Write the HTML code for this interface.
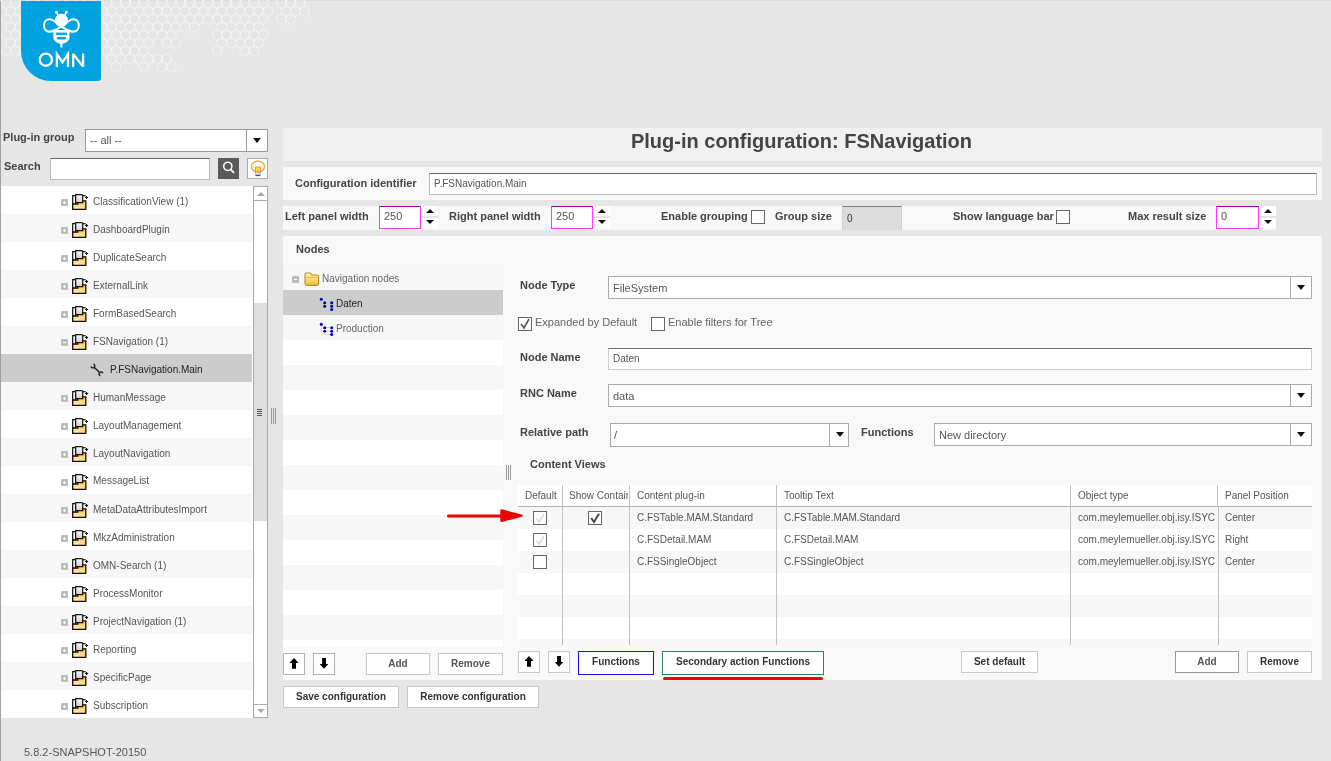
<!DOCTYPE html>
<html><head><meta charset="utf-8">
<style>
*{box-sizing:border-box;margin:0;padding:0}
html,body{width:1331px;height:761px;overflow:hidden;background:#e6e6e6;font-family:"Liberation Sans",sans-serif;color:#555}
.a{position:absolute}
.lbl{position:absolute;font-size:11px;font-weight:bold;color:#444;white-space:nowrap;line-height:13px}
.txt{position:absolute;font-size:10px;color:#666;white-space:nowrap;line-height:12px}
.inp{position:absolute;background:#fff;border:1px solid #aaa}
.tree-row{position:absolute;left:0;width:251px;height:28px}
.tree-row span{position:absolute;left:92px;top:10px;font-size:10px;color:#555;white-space:nowrap;line-height:12px}
.pm{position:absolute;left:60px;top:13px;width:7px;height:7px;background:#bbb;border-radius:1px}
.pm:before{content:"";position:absolute;left:2px;top:3px;width:3px;height:1px;background:#fff}
.pm.p:after{content:"";position:absolute;left:3px;top:2px;width:1px;height:3px;background:#fff}
.fi{position:absolute;left:71px;top:8px;width:17px;height:17px}
.btn{position:absolute;background:#fff;border:1px solid #c8c8c8;font-size:10px;font-weight:bold;color:#333;text-align:center;white-space:nowrap}
.panel{position:absolute;background:#f8f8f8}
.cb{position:absolute;width:14px;height:14px;border:1px solid #666;background:#fff}
.ddb{position:absolute;top:0;right:0;bottom:0;width:21px;border-left:1px solid #aaa}
.ddb:after{content:"";position:absolute;left:6px;top:8px;border-left:4px solid transparent;border-right:4px solid transparent;border-top:5px solid #111}
.spin{position:absolute;width:17px;height:22px;background:#fff}
.spin .u{position:absolute;left:0;top:0;width:17px;height:12px;border-bottom:2px solid #e4e4e4}
.spin .u:after{content:"";position:absolute;left:4.5px;top:3px;border-left:4px solid transparent;border-right:4px solid transparent;border-bottom:4px solid #111}
.spin .d:after{content:"";position:absolute;left:4.5px;top:14px;border-left:4px solid transparent;border-right:4px solid transparent;border-top:4px solid #111}
.mag{position:absolute;background:#fff;border:1px solid #ff38ff;border-top-color:#a000a0;font-size:11px;color:#555;padding-left:4px;line-height:18px}
.grow{position:absolute;left:0;width:794px;height:22px}
.cell{position:absolute;font-size:10px;color:#555;white-space:nowrap;top:5px;line-height:12px}
.vl{position:absolute;width:1px;background:#c0c3c6}
</style></head><body><div style="position:absolute;left:0;top:0;width:1331px;height:761px;will-change:transform">
<!-- left border -->
<div class="a" style="left:0;top:0;width:1px;height:761px;background:#a0a0a0"></div>
<div class="a" style="left:0;top:0;width:1331px;height:1px;background:#dcdde0"></div>

<!-- honeycomb -->
<svg width="0" height="0" style="position:absolute"><defs><linearGradient id="dg" x1="0" y1="0" x2="0" y2="1"><stop offset="0" stop-color="#fff"/><stop offset="0.5" stop-color="#e4e4f6"/><stop offset="1" stop-color="#d8c8a0"/></linearGradient><linearGradient id="fg" x1="0" y1="1" x2="1" y2="0"><stop offset="0" stop-color="#fdf0cc"/><stop offset="0.6" stop-color="#f8d680"/><stop offset="1" stop-color="#f5cc60"/></linearGradient></defs></svg><svg class="a" style="left:0;top:0" width="320" height="80" viewBox="0 0 320 80"><path d="M10.69 5.95 L6.10 8.60 L1.51 5.95 L1.51 0.65 L6.10 -2.00 L10.69 0.65Z M19.87 5.95 L15.28 8.60 L10.69 5.95 L10.69 0.65 L15.28 -2.00 L19.87 0.65Z M29.05 5.95 L24.46 8.60 L19.87 5.95 L19.87 0.65 L24.46 -2.00 L29.05 0.65Z M38.23 5.95 L33.64 8.60 L29.05 5.95 L29.05 0.65 L33.64 -2.00 L38.23 0.65Z M47.41 5.95 L42.82 8.60 L38.23 5.95 L38.23 0.65 L42.82 -2.00 L47.41 0.65Z M56.59 5.95 L52.00 8.60 L47.41 5.95 L47.41 0.65 L52.00 -2.00 L56.59 0.65Z M65.77 5.95 L61.18 8.60 L56.59 5.95 L56.59 0.65 L61.18 -2.00 L65.77 0.65Z M74.95 5.95 L70.36 8.60 L65.77 5.95 L65.77 0.65 L70.36 -2.00 L74.95 0.65Z M84.13 5.95 L79.54 8.60 L74.95 5.95 L74.95 0.65 L79.54 -2.00 L84.13 0.65Z M93.31 5.95 L88.72 8.60 L84.13 5.95 L84.13 0.65 L88.72 -2.00 L93.31 0.65Z M102.49 5.95 L97.90 8.60 L93.31 5.95 L93.31 0.65 L97.90 -2.00 L102.49 0.65Z M111.67 5.95 L107.08 8.60 L102.49 5.95 L102.49 0.65 L107.08 -2.00 L111.67 0.65Z M120.85 5.95 L116.26 8.60 L111.67 5.95 L111.67 0.65 L116.26 -2.00 L120.85 0.65Z M130.03 5.95 L125.44 8.60 L120.85 5.95 L120.85 0.65 L125.44 -2.00 L130.03 0.65Z M139.21 5.95 L134.62 8.60 L130.03 5.95 L130.03 0.65 L134.62 -2.00 L139.21 0.65Z M148.39 5.95 L143.80 8.60 L139.21 5.95 L139.21 0.65 L143.80 -2.00 L148.39 0.65Z M157.57 5.95 L152.98 8.60 L148.39 5.95 L148.39 0.65 L152.98 -2.00 L157.57 0.65Z M166.75 5.95 L162.16 8.60 L157.57 5.95 L157.57 0.65 L162.16 -2.00 L166.75 0.65Z M175.93 5.95 L171.34 8.60 L166.75 5.95 L166.75 0.65 L171.34 -2.00 L175.93 0.65Z M185.11 5.95 L180.52 8.60 L175.93 5.95 L175.93 0.65 L180.52 -2.00 L185.11 0.65Z M194.29 5.95 L189.70 8.60 L185.11 5.95 L185.11 0.65 L189.70 -2.00 L194.29 0.65Z M203.47 5.95 L198.88 8.60 L194.29 5.95 L194.29 0.65 L198.88 -2.00 L203.47 0.65Z M212.65 5.95 L208.06 8.60 L203.47 5.95 L203.47 0.65 L208.06 -2.00 L212.65 0.65Z M221.83 5.95 L217.24 8.60 L212.65 5.95 L212.65 0.65 L217.24 -2.00 L221.83 0.65Z M231.01 5.95 L226.42 8.60 L221.83 5.95 L221.83 0.65 L226.42 -2.00 L231.01 0.65Z M240.19 5.95 L235.60 8.60 L231.01 5.95 L231.01 0.65 L235.60 -2.00 L240.19 0.65Z M249.37 5.95 L244.78 8.60 L240.19 5.95 L240.19 0.65 L244.78 -2.00 L249.37 0.65Z M258.55 5.95 L253.96 8.60 L249.37 5.95 L249.37 0.65 L253.96 -2.00 L258.55 0.65Z M267.73 5.95 L263.14 8.60 L258.55 5.95 L258.55 0.65 L263.14 -2.00 L267.73 0.65Z M286.09 5.95 L281.50 8.60 L276.91 5.95 L276.91 0.65 L281.50 -2.00 L286.09 0.65Z M295.27 5.95 L290.68 8.60 L286.09 5.95 L286.09 0.65 L290.68 -2.00 L295.27 0.65Z M304.45 5.95 L299.86 8.60 L295.27 5.95 L295.27 0.65 L299.86 -2.00 L304.45 0.65Z M15.27 13.90 L10.68 16.55 L6.09 13.90 L6.09 8.60 L10.68 5.95 L15.27 8.60Z M24.45 13.90 L19.86 16.55 L15.27 13.90 L15.27 8.60 L19.86 5.95 L24.45 8.60Z M33.63 13.90 L29.04 16.55 L24.45 13.90 L24.45 8.60 L29.04 5.95 L33.63 8.60Z M42.81 13.90 L38.22 16.55 L33.63 13.90 L33.63 8.60 L38.22 5.95 L42.81 8.60Z M51.99 13.90 L47.40 16.55 L42.81 13.90 L42.81 8.60 L47.40 5.95 L51.99 8.60Z M61.17 13.90 L56.58 16.55 L51.99 13.90 L51.99 8.60 L56.58 5.95 L61.17 8.60Z M70.35 13.90 L65.76 16.55 L61.17 13.90 L61.17 8.60 L65.76 5.95 L70.35 8.60Z M79.53 13.90 L74.94 16.55 L70.35 13.90 L70.35 8.60 L74.94 5.95 L79.53 8.60Z M88.71 13.90 L84.12 16.55 L79.53 13.90 L79.53 8.60 L84.12 5.95 L88.71 8.60Z M97.89 13.90 L93.30 16.55 L88.71 13.90 L88.71 8.60 L93.30 5.95 L97.89 8.60Z M107.07 13.90 L102.48 16.55 L97.89 13.90 L97.89 8.60 L102.48 5.95 L107.07 8.60Z M116.25 13.90 L111.66 16.55 L107.07 13.90 L107.07 8.60 L111.66 5.95 L116.25 8.60Z M125.43 13.90 L120.84 16.55 L116.25 13.90 L116.25 8.60 L120.84 5.95 L125.43 8.60Z M134.61 13.90 L130.02 16.55 L125.43 13.90 L125.43 8.60 L130.02 5.95 L134.61 8.60Z M143.79 13.90 L139.20 16.55 L134.61 13.90 L134.61 8.60 L139.20 5.95 L143.79 8.60Z M152.97 13.90 L148.38 16.55 L143.79 13.90 L143.79 8.60 L148.38 5.95 L152.97 8.60Z M162.15 13.90 L157.56 16.55 L152.97 13.90 L152.97 8.60 L157.56 5.95 L162.15 8.60Z M171.33 13.90 L166.74 16.55 L162.15 13.90 L162.15 8.60 L166.74 5.95 L171.33 8.60Z M180.51 13.90 L175.92 16.55 L171.33 13.90 L171.33 8.60 L175.92 5.95 L180.51 8.60Z M189.69 13.90 L185.10 16.55 L180.51 13.90 L180.51 8.60 L185.10 5.95 L189.69 8.60Z M198.87 13.90 L194.28 16.55 L189.69 13.90 L189.69 8.60 L194.28 5.95 L198.87 8.60Z M208.05 13.90 L203.46 16.55 L198.87 13.90 L198.87 8.60 L203.46 5.95 L208.05 8.60Z M217.23 13.90 L212.64 16.55 L208.05 13.90 L208.05 8.60 L212.64 5.95 L217.23 8.60Z M226.41 13.90 L221.82 16.55 L217.23 13.90 L217.23 8.60 L221.82 5.95 L226.41 8.60Z M235.59 13.90 L231.00 16.55 L226.41 13.90 L226.41 8.60 L231.00 5.95 L235.59 8.60Z M244.77 13.90 L240.18 16.55 L235.59 13.90 L235.59 8.60 L240.18 5.95 L244.77 8.60Z M253.95 13.90 L249.36 16.55 L244.77 13.90 L244.77 8.60 L249.36 5.95 L253.95 8.60Z M263.13 13.90 L258.54 16.55 L253.95 13.90 L253.95 8.60 L258.54 5.95 L263.13 8.60Z M272.31 13.90 L267.72 16.55 L263.13 13.90 L263.13 8.60 L267.72 5.95 L272.31 8.60Z M290.67 13.90 L286.08 16.55 L281.49 13.90 L281.49 8.60 L286.08 5.95 L290.67 8.60Z M299.85 13.90 L295.26 16.55 L290.67 13.90 L290.67 8.60 L295.26 5.95 L299.85 8.60Z M309.03 13.90 L304.44 16.55 L299.85 13.90 L299.85 8.60 L304.44 5.95 L309.03 8.60Z M10.69 21.85 L6.10 24.50 L1.51 21.85 L1.51 16.55 L6.10 13.90 L10.69 16.55Z M19.87 21.85 L15.28 24.50 L10.69 21.85 L10.69 16.55 L15.28 13.90 L19.87 16.55Z M29.05 21.85 L24.46 24.50 L19.87 21.85 L19.87 16.55 L24.46 13.90 L29.05 16.55Z M38.23 21.85 L33.64 24.50 L29.05 21.85 L29.05 16.55 L33.64 13.90 L38.23 16.55Z M47.41 21.85 L42.82 24.50 L38.23 21.85 L38.23 16.55 L42.82 13.90 L47.41 16.55Z M56.59 21.85 L52.00 24.50 L47.41 21.85 L47.41 16.55 L52.00 13.90 L56.59 16.55Z M65.77 21.85 L61.18 24.50 L56.59 21.85 L56.59 16.55 L61.18 13.90 L65.77 16.55Z M74.95 21.85 L70.36 24.50 L65.77 21.85 L65.77 16.55 L70.36 13.90 L74.95 16.55Z M84.13 21.85 L79.54 24.50 L74.95 21.85 L74.95 16.55 L79.54 13.90 L84.13 16.55Z M93.31 21.85 L88.72 24.50 L84.13 21.85 L84.13 16.55 L88.72 13.90 L93.31 16.55Z M102.49 21.85 L97.90 24.50 L93.31 21.85 L93.31 16.55 L97.90 13.90 L102.49 16.55Z M111.67 21.85 L107.08 24.50 L102.49 21.85 L102.49 16.55 L107.08 13.90 L111.67 16.55Z M120.85 21.85 L116.26 24.50 L111.67 21.85 L111.67 16.55 L116.26 13.90 L120.85 16.55Z M130.03 21.85 L125.44 24.50 L120.85 21.85 L120.85 16.55 L125.44 13.90 L130.03 16.55Z M139.21 21.85 L134.62 24.50 L130.03 21.85 L130.03 16.55 L134.62 13.90 L139.21 16.55Z M148.39 21.85 L143.80 24.50 L139.21 21.85 L139.21 16.55 L143.80 13.90 L148.39 16.55Z M157.57 21.85 L152.98 24.50 L148.39 21.85 L148.39 16.55 L152.98 13.90 L157.57 16.55Z M166.75 21.85 L162.16 24.50 L157.57 21.85 L157.57 16.55 L162.16 13.90 L166.75 16.55Z M175.93 21.85 L171.34 24.50 L166.75 21.85 L166.75 16.55 L171.34 13.90 L175.93 16.55Z M185.11 21.85 L180.52 24.50 L175.93 21.85 L175.93 16.55 L180.52 13.90 L185.11 16.55Z M194.29 21.85 L189.70 24.50 L185.11 21.85 L185.11 16.55 L189.70 13.90 L194.29 16.55Z M203.47 21.85 L198.88 24.50 L194.29 21.85 L194.29 16.55 L198.88 13.90 L203.47 16.55Z M212.65 21.85 L208.06 24.50 L203.47 21.85 L203.47 16.55 L208.06 13.90 L212.65 16.55Z M221.83 21.85 L217.24 24.50 L212.65 21.85 L212.65 16.55 L217.24 13.90 L221.83 16.55Z M231.01 21.85 L226.42 24.50 L221.83 21.85 L221.83 16.55 L226.42 13.90 L231.01 16.55Z M240.19 21.85 L235.60 24.50 L231.01 21.85 L231.01 16.55 L235.60 13.90 L240.19 16.55Z M249.37 21.85 L244.78 24.50 L240.19 21.85 L240.19 16.55 L244.78 13.90 L249.37 16.55Z M258.55 21.85 L253.96 24.50 L249.37 21.85 L249.37 16.55 L253.96 13.90 L258.55 16.55Z M267.73 21.85 L263.14 24.50 L258.55 21.85 L258.55 16.55 L263.14 13.90 L267.73 16.55Z M286.09 21.85 L281.50 24.50 L276.91 21.85 L276.91 16.55 L281.50 13.90 L286.09 16.55Z M295.27 21.85 L290.68 24.50 L286.09 21.85 L286.09 16.55 L290.68 13.90 L295.27 16.55Z M15.27 29.80 L10.68 32.45 L6.09 29.80 L6.09 24.50 L10.68 21.85 L15.27 24.50Z M24.45 29.80 L19.86 32.45 L15.27 29.80 L15.27 24.50 L19.86 21.85 L24.45 24.50Z M33.63 29.80 L29.04 32.45 L24.45 29.80 L24.45 24.50 L29.04 21.85 L33.63 24.50Z M42.81 29.80 L38.22 32.45 L33.63 29.80 L33.63 24.50 L38.22 21.85 L42.81 24.50Z M51.99 29.80 L47.40 32.45 L42.81 29.80 L42.81 24.50 L47.40 21.85 L51.99 24.50Z M61.17 29.80 L56.58 32.45 L51.99 29.80 L51.99 24.50 L56.58 21.85 L61.17 24.50Z M70.35 29.80 L65.76 32.45 L61.17 29.80 L61.17 24.50 L65.76 21.85 L70.35 24.50Z M79.53 29.80 L74.94 32.45 L70.35 29.80 L70.35 24.50 L74.94 21.85 L79.53 24.50Z M88.71 29.80 L84.12 32.45 L79.53 29.80 L79.53 24.50 L84.12 21.85 L88.71 24.50Z M97.89 29.80 L93.30 32.45 L88.71 29.80 L88.71 24.50 L93.30 21.85 L97.89 24.50Z M107.07 29.80 L102.48 32.45 L97.89 29.80 L97.89 24.50 L102.48 21.85 L107.07 24.50Z M116.25 29.80 L111.66 32.45 L107.07 29.80 L107.07 24.50 L111.66 21.85 L116.25 24.50Z M125.43 29.80 L120.84 32.45 L116.25 29.80 L116.25 24.50 L120.84 21.85 L125.43 24.50Z M134.61 29.80 L130.02 32.45 L125.43 29.80 L125.43 24.50 L130.02 21.85 L134.61 24.50Z M143.79 29.80 L139.20 32.45 L134.61 29.80 L134.61 24.50 L139.20 21.85 L143.79 24.50Z M152.97 29.80 L148.38 32.45 L143.79 29.80 L143.79 24.50 L148.38 21.85 L152.97 24.50Z M162.15 29.80 L157.56 32.45 L152.97 29.80 L152.97 24.50 L157.56 21.85 L162.15 24.50Z M171.33 29.80 L166.74 32.45 L162.15 29.80 L162.15 24.50 L166.74 21.85 L171.33 24.50Z M180.51 29.80 L175.92 32.45 L171.33 29.80 L171.33 24.50 L175.92 21.85 L180.51 24.50Z M189.69 29.80 L185.10 32.45 L180.51 29.80 L180.51 24.50 L185.10 21.85 L189.69 24.50Z M198.87 29.80 L194.28 32.45 L189.69 29.80 L189.69 24.50 L194.28 21.85 L198.87 24.50Z M226.41 29.80 L221.82 32.45 L217.23 29.80 L217.23 24.50 L221.82 21.85 L226.41 24.50Z M235.59 29.80 L231.00 32.45 L226.41 29.80 L226.41 24.50 L231.00 21.85 L235.59 24.50Z M244.77 29.80 L240.18 32.45 L235.59 29.80 L235.59 24.50 L240.18 21.85 L244.77 24.50Z M253.95 29.80 L249.36 32.45 L244.77 29.80 L244.77 24.50 L249.36 21.85 L253.95 24.50Z M263.13 29.80 L258.54 32.45 L253.95 29.80 L253.95 24.50 L258.54 21.85 L263.13 24.50Z M10.69 37.75 L6.10 40.40 L1.51 37.75 L1.51 32.45 L6.10 29.80 L10.69 32.45Z M19.87 37.75 L15.28 40.40 L10.69 37.75 L10.69 32.45 L15.28 29.80 L19.87 32.45Z M29.05 37.75 L24.46 40.40 L19.87 37.75 L19.87 32.45 L24.46 29.80 L29.05 32.45Z M38.23 37.75 L33.64 40.40 L29.05 37.75 L29.05 32.45 L33.64 29.80 L38.23 32.45Z M47.41 37.75 L42.82 40.40 L38.23 37.75 L38.23 32.45 L42.82 29.80 L47.41 32.45Z M56.59 37.75 L52.00 40.40 L47.41 37.75 L47.41 32.45 L52.00 29.80 L56.59 32.45Z M65.77 37.75 L61.18 40.40 L56.59 37.75 L56.59 32.45 L61.18 29.80 L65.77 32.45Z M74.95 37.75 L70.36 40.40 L65.77 37.75 L65.77 32.45 L70.36 29.80 L74.95 32.45Z M84.13 37.75 L79.54 40.40 L74.95 37.75 L74.95 32.45 L79.54 29.80 L84.13 32.45Z M93.31 37.75 L88.72 40.40 L84.13 37.75 L84.13 32.45 L88.72 29.80 L93.31 32.45Z M102.49 37.75 L97.90 40.40 L93.31 37.75 L93.31 32.45 L97.90 29.80 L102.49 32.45Z M111.67 37.75 L107.08 40.40 L102.49 37.75 L102.49 32.45 L107.08 29.80 L111.67 32.45Z M120.85 37.75 L116.26 40.40 L111.67 37.75 L111.67 32.45 L116.26 29.80 L120.85 32.45Z M130.03 37.75 L125.44 40.40 L120.85 37.75 L120.85 32.45 L125.44 29.80 L130.03 32.45Z M139.21 37.75 L134.62 40.40 L130.03 37.75 L130.03 32.45 L134.62 29.80 L139.21 32.45Z M148.39 37.75 L143.80 40.40 L139.21 37.75 L139.21 32.45 L143.80 29.80 L148.39 32.45Z M157.57 37.75 L152.98 40.40 L148.39 37.75 L148.39 32.45 L152.98 29.80 L157.57 32.45Z M166.75 37.75 L162.16 40.40 L157.57 37.75 L157.57 32.45 L162.16 29.80 L166.75 32.45Z M175.93 37.75 L171.34 40.40 L166.75 37.75 L166.75 32.45 L171.34 29.80 L175.93 32.45Z M221.83 37.75 L217.24 40.40 L212.65 37.75 L212.65 32.45 L217.24 29.80 L221.83 32.45Z M231.01 37.75 L226.42 40.40 L221.83 37.75 L221.83 32.45 L226.42 29.80 L231.01 32.45Z M240.19 37.75 L235.60 40.40 L231.01 37.75 L231.01 32.45 L235.60 29.80 L240.19 32.45Z M249.37 37.75 L244.78 40.40 L240.19 37.75 L240.19 32.45 L244.78 29.80 L249.37 32.45Z M258.55 37.75 L253.96 40.40 L249.37 37.75 L249.37 32.45 L253.96 29.80 L258.55 32.45Z M267.73 37.75 L263.14 40.40 L258.55 37.75 L258.55 32.45 L263.14 29.80 L267.73 32.45Z M15.27 45.70 L10.68 48.35 L6.09 45.70 L6.09 40.40 L10.68 37.75 L15.27 40.40Z M24.45 45.70 L19.86 48.35 L15.27 45.70 L15.27 40.40 L19.86 37.75 L24.45 40.40Z M33.63 45.70 L29.04 48.35 L24.45 45.70 L24.45 40.40 L29.04 37.75 L33.63 40.40Z M42.81 45.70 L38.22 48.35 L33.63 45.70 L33.63 40.40 L38.22 37.75 L42.81 40.40Z M51.99 45.70 L47.40 48.35 L42.81 45.70 L42.81 40.40 L47.40 37.75 L51.99 40.40Z M61.17 45.70 L56.58 48.35 L51.99 45.70 L51.99 40.40 L56.58 37.75 L61.17 40.40Z M70.35 45.70 L65.76 48.35 L61.17 45.70 L61.17 40.40 L65.76 37.75 L70.35 40.40Z M79.53 45.70 L74.94 48.35 L70.35 45.70 L70.35 40.40 L74.94 37.75 L79.53 40.40Z M88.71 45.70 L84.12 48.35 L79.53 45.70 L79.53 40.40 L84.12 37.75 L88.71 40.40Z M97.89 45.70 L93.30 48.35 L88.71 45.70 L88.71 40.40 L93.30 37.75 L97.89 40.40Z M107.07 45.70 L102.48 48.35 L97.89 45.70 L97.89 40.40 L102.48 37.75 L107.07 40.40Z M116.25 45.70 L111.66 48.35 L107.07 45.70 L107.07 40.40 L111.66 37.75 L116.25 40.40Z M125.43 45.70 L120.84 48.35 L116.25 45.70 L116.25 40.40 L120.84 37.75 L125.43 40.40Z M134.61 45.70 L130.02 48.35 L125.43 45.70 L125.43 40.40 L130.02 37.75 L134.61 40.40Z M143.79 45.70 L139.20 48.35 L134.61 45.70 L134.61 40.40 L139.20 37.75 L143.79 40.40Z M152.97 45.70 L148.38 48.35 L143.79 45.70 L143.79 40.40 L148.38 37.75 L152.97 40.40Z M171.33 45.70 L166.74 48.35 L162.15 45.70 L162.15 40.40 L166.74 37.75 L171.33 40.40Z M180.51 45.70 L175.92 48.35 L171.33 45.70 L171.33 40.40 L175.92 37.75 L180.51 40.40Z M226.41 45.70 L221.82 48.35 L217.23 45.70 L217.23 40.40 L221.82 37.75 L226.41 40.40Z M235.59 45.70 L231.00 48.35 L226.41 45.70 L226.41 40.40 L231.00 37.75 L235.59 40.40Z M244.77 45.70 L240.18 48.35 L235.59 45.70 L235.59 40.40 L240.18 37.75 L244.77 40.40Z M253.95 45.70 L249.36 48.35 L244.77 45.70 L244.77 40.40 L249.36 37.75 L253.95 40.40Z M263.13 45.70 L258.54 48.35 L253.95 45.70 L253.95 40.40 L258.54 37.75 L263.13 40.40Z M10.69 53.65 L6.10 56.30 L1.51 53.65 L1.51 48.35 L6.10 45.70 L10.69 48.35Z M19.87 53.65 L15.28 56.30 L10.69 53.65 L10.69 48.35 L15.28 45.70 L19.87 48.35Z M29.05 53.65 L24.46 56.30 L19.87 53.65 L19.87 48.35 L24.46 45.70 L29.05 48.35Z M38.23 53.65 L33.64 56.30 L29.05 53.65 L29.05 48.35 L33.64 45.70 L38.23 48.35Z M47.41 53.65 L42.82 56.30 L38.23 53.65 L38.23 48.35 L42.82 45.70 L47.41 48.35Z M56.59 53.65 L52.00 56.30 L47.41 53.65 L47.41 48.35 L52.00 45.70 L56.59 48.35Z M65.77 53.65 L61.18 56.30 L56.59 53.65 L56.59 48.35 L61.18 45.70 L65.77 48.35Z M74.95 53.65 L70.36 56.30 L65.77 53.65 L65.77 48.35 L70.36 45.70 L74.95 48.35Z M84.13 53.65 L79.54 56.30 L74.95 53.65 L74.95 48.35 L79.54 45.70 L84.13 48.35Z M93.31 53.65 L88.72 56.30 L84.13 53.65 L84.13 48.35 L88.72 45.70 L93.31 48.35Z M102.49 53.65 L97.90 56.30 L93.31 53.65 L93.31 48.35 L97.90 45.70 L102.49 48.35Z M111.67 53.65 L107.08 56.30 L102.49 53.65 L102.49 48.35 L107.08 45.70 L111.67 48.35Z M120.85 53.65 L116.26 56.30 L111.67 53.65 L111.67 48.35 L116.26 45.70 L120.85 48.35Z M130.03 53.65 L125.44 56.30 L120.85 53.65 L120.85 48.35 L125.44 45.70 L130.03 48.35Z M139.21 53.65 L134.62 56.30 L130.03 53.65 L130.03 48.35 L134.62 45.70 L139.21 48.35Z M148.39 53.65 L143.80 56.30 L139.21 53.65 L139.21 48.35 L143.80 45.70 L148.39 48.35Z M221.83 53.65 L217.24 56.30 L212.65 53.65 L212.65 48.35 L217.24 45.70 L221.83 48.35Z M249.37 53.65 L244.78 56.30 L240.19 53.65 L240.19 48.35 L244.78 45.70 L249.37 48.35Z M258.55 53.65 L253.96 56.30 L249.37 53.65 L249.37 48.35 L253.96 45.70 L258.55 48.35Z M116.25 61.60 L111.66 64.25 L107.07 61.60 L107.07 56.30 L111.66 53.65 L116.25 56.30Z M125.43 61.60 L120.84 64.25 L116.25 61.60 L116.25 56.30 L120.84 53.65 L125.43 56.30Z M134.61 61.60 L130.02 64.25 L125.43 61.60 L125.43 56.30 L130.02 53.65 L134.61 56.30Z M143.79 61.60 L139.20 64.25 L134.61 61.60 L134.61 56.30 L139.20 53.65 L143.79 56.30Z M152.97 61.60 L148.38 64.25 L143.79 61.60 L143.79 56.30 L148.38 53.65 L152.97 56.30Z M162.15 61.60 L157.56 64.25 L152.97 61.60 L152.97 56.30 L157.56 53.65 L162.15 56.30Z M171.33 61.60 L166.74 64.25 L162.15 61.60 L162.15 56.30 L166.74 53.65 L171.33 56.30Z M120.85 69.55 L116.26 72.20 L111.67 69.55 L111.67 64.25 L116.26 61.60 L120.85 64.25Z M148.39 69.55 L143.80 72.20 L139.21 69.55 L139.21 64.25 L143.80 61.60 L148.39 64.25Z M166.75 69.55 L162.16 72.20 L157.57 69.55 L157.57 64.25 L162.16 61.60 L166.75 64.25Z M175.93 69.55 L171.34 72.20 L166.75 69.55 L166.75 64.25 L171.34 61.60 L175.93 64.25Z" fill="none" stroke="#f3f3f3" stroke-width="1"/></svg>

<!-- logo -->
<div class="a" style="left:21px;top:1px;width:80px;height:80px;background:#00a3e0;border-radius:0 0 3px 30px"></div>
<svg class="a" style="left:21px;top:1px" width="80" height="80" viewBox="0 0 80 80">
  <g fill="#fff">
    <circle cx="40.4" cy="19.3" r="6.6"/>
    <circle cx="35.5" cy="11.2" r="1.5"/><circle cx="45.3" cy="11.2" r="1.5"/>
    <path d="M32.3 28.7 H48.5 V37 Q48.5 39.6 45.5 41.2 L40.4 43.6 L35.3 41.2 Q32.3 39.6 32.3 37 Z"/>
  </g>
  <g fill="#00a3e0">
    <path d="M36.3 28.9 L40.4 26.4 L44.5 28.9 Z"/>
    <rect x="34.8" y="31.6" width="11.2" height="2.3"/>
    <path d="M35.8 36 H45 V37 Q45 38.6 43 38.6 H37.8 Q35.8 38.6 35.8 37 Z"/>
  </g>
  <g fill="none" stroke="#fff" stroke-width="2.1">
    <path d="M40.4 25.3 C36 22.2 32.2 18.2 28.6 18.2 C25 18.2 23 21.2 23 24.4 C23 27.8 25 30.6 28.6 30.6 C32.2 30.6 36 28.4 40.4 25.3 C44.8 28.4 48.6 30.6 52.2 30.6 C55.8 30.6 57.8 27.8 57.8 24.4 C57.8 21.2 55.8 18.2 52.2 18.2 C48.6 18.2 44.8 22.2 40.4 25.3 Z"/>
    <path d="M35.5 11.2 L37.3 15 M45.3 11.2 L43.5 15" stroke-width="1.6"/>
    <path d="M40.4 43 V46.4" stroke-width="2"/>
  </g>
  <g fill="none" stroke="#fff" stroke-width="2.3">
    <circle cx="24.85" cy="58.65" r="6.1"/>
    <path d="M35.9 65.9 V53 L41.45 61.3 L47 53 V65.9" stroke-linejoin="miter"/>
    <path d="M52.1 65.9 V53 L62.1 65.5 V52.6" stroke-linejoin="bevel"/>
  </g>
</svg>

<!-- left panel header -->
<div class="lbl" style="left:3px;top:131px">Plug-in group</div>
<div class="inp" style="left:85px;top:129px;width:183px;height:23px;border-color:#999">
  <div class="a" style="left:4px;top:4px;font-size:11px;color:#555;line-height:13px">-- all --</div>
  <div class="ddb" style="border-color:#999"></div>
</div>
<div class="lbl" style="left:4px;top:160px">Search</div>
<div class="inp" style="left:50px;top:158px;width:160px;height:22px;border-color:#bbb;border-top-color:#666"></div>
<div class="a" style="left:218px;top:158px;width:21px;height:21px;background:#5a5a5a">
  <svg width="21" height="21" viewBox="0 0 21 21"><circle cx="9.8" cy="8.3" r="4.1" fill="none" stroke="#fff" stroke-width="1.5"/><path d="M12.6 11.4 L16 14.8" stroke="#fff" stroke-width="1.7"/></svg>
</div>
<div class="a" style="left:247px;top:158px;width:21px;height:21px;background:#fff;border:1px solid #aaa">
  <svg width="19" height="19" viewBox="0 0 19 19"><ellipse cx="10" cy="7.6" rx="6.6" ry="5.4" fill="#fff6c8" stroke="#f0a040" stroke-width="1.2"/><ellipse cx="10" cy="6.3" rx="4.2" ry="2.8" fill="#fffef4"/><rect x="7.4" y="8.2" width="5.1" height="4.6" fill="#f6dc40" stroke="#f09030" stroke-width="0.9"/><rect x="7.2" y="13" width="5.5" height="3.6" fill="#a8aab0"/><rect x="8" y="13.8" width="3.8" height="1.4" fill="#e8eaf0"/><rect x="7.6" y="16.2" width="4.7" height="0.9" fill="#333"/></svg>
</div>

<!-- tree list -->
<div class="a" style="left:1px;top:186px;width:252px;height:532px;background:#fff"><div class="tree-row" style="top:0px;background:#fff">
<div class="pm p"></div><svg class="fi" width="17" height="17" viewBox="0 0 17 17"><path d="M0.7 1.7 H3.7 V10 H0.7 Z" fill="#fbfbff" stroke="#111" stroke-width="1.2"/><path d="M10.6 1.7 H13.6" fill="none" stroke="#111" stroke-width="1.2"/><path d="M3.7 0.6 H10 L10.7 1.3 V8.6 H3.7 Z" fill="url(#dg)" stroke="#111" stroke-width="1.2"/><path d="M0.7 10.2 H5.8 V8.6 H10.7 V6.8 H13.8 V15.4 H0.7 Z" fill="url(#fg)" stroke="#1a0a00" stroke-width="1.3"/><path d="M14.6 2 V5 M13.1 3.5 H16.1" stroke="#111" stroke-width="1.1"/></svg><span>ClassificationView (1)</span>
</div>
<div class="tree-row" style="top:28px;background:#f7f7f7">
<div class="pm p"></div><svg class="fi" width="17" height="17" viewBox="0 0 17 17"><path d="M0.7 1.7 H3.7 V10 H0.7 Z" fill="#fbfbff" stroke="#111" stroke-width="1.2"/><path d="M10.6 1.7 H13.6" fill="none" stroke="#111" stroke-width="1.2"/><path d="M3.7 0.6 H10 L10.7 1.3 V8.6 H3.7 Z" fill="url(#dg)" stroke="#111" stroke-width="1.2"/><path d="M0.7 10.2 H5.8 V8.6 H10.7 V6.8 H13.8 V15.4 H0.7 Z" fill="url(#fg)" stroke="#1a0a00" stroke-width="1.3"/><path d="M14.6 2 V5 M13.1 3.5 H16.1" stroke="#111" stroke-width="1.1"/></svg><span>DashboardPlugin</span>
</div>
<div class="tree-row" style="top:56px;background:#fff">
<div class="pm p"></div><svg class="fi" width="17" height="17" viewBox="0 0 17 17"><path d="M0.7 1.7 H3.7 V10 H0.7 Z" fill="#fbfbff" stroke="#111" stroke-width="1.2"/><path d="M10.6 1.7 H13.6" fill="none" stroke="#111" stroke-width="1.2"/><path d="M3.7 0.6 H10 L10.7 1.3 V8.6 H3.7 Z" fill="url(#dg)" stroke="#111" stroke-width="1.2"/><path d="M0.7 10.2 H5.8 V8.6 H10.7 V6.8 H13.8 V15.4 H0.7 Z" fill="url(#fg)" stroke="#1a0a00" stroke-width="1.3"/><path d="M14.6 2 V5 M13.1 3.5 H16.1" stroke="#111" stroke-width="1.1"/></svg><span>DuplicateSearch</span>
</div>
<div class="tree-row" style="top:84px;background:#f7f7f7">
<div class="pm p"></div><svg class="fi" width="17" height="17" viewBox="0 0 17 17"><path d="M0.7 1.7 H3.7 V10 H0.7 Z" fill="#fbfbff" stroke="#111" stroke-width="1.2"/><path d="M10.6 1.7 H13.6" fill="none" stroke="#111" stroke-width="1.2"/><path d="M3.7 0.6 H10 L10.7 1.3 V8.6 H3.7 Z" fill="url(#dg)" stroke="#111" stroke-width="1.2"/><path d="M0.7 10.2 H5.8 V8.6 H10.7 V6.8 H13.8 V15.4 H0.7 Z" fill="url(#fg)" stroke="#1a0a00" stroke-width="1.3"/><path d="M14.6 2 V5 M13.1 3.5 H16.1" stroke="#111" stroke-width="1.1"/></svg><span>ExternalLink</span>
</div>
<div class="tree-row" style="top:112px;background:#fff">
<div class="pm p"></div><svg class="fi" width="17" height="17" viewBox="0 0 17 17"><path d="M0.7 1.7 H3.7 V10 H0.7 Z" fill="#fbfbff" stroke="#111" stroke-width="1.2"/><path d="M10.6 1.7 H13.6" fill="none" stroke="#111" stroke-width="1.2"/><path d="M3.7 0.6 H10 L10.7 1.3 V8.6 H3.7 Z" fill="url(#dg)" stroke="#111" stroke-width="1.2"/><path d="M0.7 10.2 H5.8 V8.6 H10.7 V6.8 H13.8 V15.4 H0.7 Z" fill="url(#fg)" stroke="#1a0a00" stroke-width="1.3"/><path d="M14.6 2 V5 M13.1 3.5 H16.1" stroke="#111" stroke-width="1.1"/></svg><span>FormBasedSearch</span>
</div>
<div class="tree-row" style="top:140px;background:#f7f7f7">
<div class="pm"></div><svg class="fi" width="17" height="17" viewBox="0 0 17 17"><path d="M0.7 1.7 H3.7 V10 H0.7 Z" fill="#fbfbff" stroke="#111" stroke-width="1.2"/><path d="M10.6 1.7 H13.6" fill="none" stroke="#111" stroke-width="1.2"/><path d="M3.7 0.6 H10 L10.7 1.3 V8.6 H3.7 Z" fill="url(#dg)" stroke="#111" stroke-width="1.2"/><path d="M0.7 10.2 H5.8 V8.6 H10.7 V6.8 H13.8 V15.4 H0.7 Z" fill="url(#fg)" stroke="#1a0a00" stroke-width="1.3"/><path d="M14.6 2 V5 M13.1 3.5 H16.1" stroke="#111" stroke-width="1.1"/></svg><span>FSNavigation (1)</span>
</div>
<div class="tree-row" style="top:168px;background:#cccccc">
<svg class="a" style="left:89px;top:8px" width="15" height="15" viewBox="0 0 15 15"><g fill="none" stroke="#2a2a2a" stroke-width="1.5"><path d="M3.9 5.1 L9.9 10.8"/><path d="M0.9 4.5 A2 2 0 1 0 3.4 1.9"/><path d="M12.9 11.3 A2 2 0 1 0 10.3 13.9"/></g></svg>
<span style="left:109px;color:#222">P.FSNavigation.Main</span>
</div>
<div class="tree-row" style="top:196px;background:#f7f7f7">
<div class="pm p"></div><svg class="fi" width="17" height="17" viewBox="0 0 17 17"><path d="M0.7 1.7 H3.7 V10 H0.7 Z" fill="#fbfbff" stroke="#111" stroke-width="1.2"/><path d="M10.6 1.7 H13.6" fill="none" stroke="#111" stroke-width="1.2"/><path d="M3.7 0.6 H10 L10.7 1.3 V8.6 H3.7 Z" fill="url(#dg)" stroke="#111" stroke-width="1.2"/><path d="M0.7 10.2 H5.8 V8.6 H10.7 V6.8 H13.8 V15.4 H0.7 Z" fill="url(#fg)" stroke="#1a0a00" stroke-width="1.3"/><path d="M14.6 2 V5 M13.1 3.5 H16.1" stroke="#111" stroke-width="1.1"/></svg><span>HumanMessage</span>
</div>
<div class="tree-row" style="top:224px;background:#fff">
<div class="pm p"></div><svg class="fi" width="17" height="17" viewBox="0 0 17 17"><path d="M0.7 1.7 H3.7 V10 H0.7 Z" fill="#fbfbff" stroke="#111" stroke-width="1.2"/><path d="M10.6 1.7 H13.6" fill="none" stroke="#111" stroke-width="1.2"/><path d="M3.7 0.6 H10 L10.7 1.3 V8.6 H3.7 Z" fill="url(#dg)" stroke="#111" stroke-width="1.2"/><path d="M0.7 10.2 H5.8 V8.6 H10.7 V6.8 H13.8 V15.4 H0.7 Z" fill="url(#fg)" stroke="#1a0a00" stroke-width="1.3"/><path d="M14.6 2 V5 M13.1 3.5 H16.1" stroke="#111" stroke-width="1.1"/></svg><span>LayoutManagement</span>
</div>
<div class="tree-row" style="top:252px;background:#f7f7f7">
<div class="pm p"></div><svg class="fi" width="17" height="17" viewBox="0 0 17 17"><path d="M0.7 1.7 H3.7 V10 H0.7 Z" fill="#fbfbff" stroke="#111" stroke-width="1.2"/><path d="M10.6 1.7 H13.6" fill="none" stroke="#111" stroke-width="1.2"/><path d="M3.7 0.6 H10 L10.7 1.3 V8.6 H3.7 Z" fill="url(#dg)" stroke="#111" stroke-width="1.2"/><path d="M0.7 10.2 H5.8 V8.6 H10.7 V6.8 H13.8 V15.4 H0.7 Z" fill="url(#fg)" stroke="#1a0a00" stroke-width="1.3"/><path d="M14.6 2 V5 M13.1 3.5 H16.1" stroke="#111" stroke-width="1.1"/></svg><span>LayoutNavigation</span>
</div>
<div class="tree-row" style="top:280px;background:#fff">
<div class="pm p"></div><svg class="fi" width="17" height="17" viewBox="0 0 17 17"><path d="M0.7 1.7 H3.7 V10 H0.7 Z" fill="#fbfbff" stroke="#111" stroke-width="1.2"/><path d="M10.6 1.7 H13.6" fill="none" stroke="#111" stroke-width="1.2"/><path d="M3.7 0.6 H10 L10.7 1.3 V8.6 H3.7 Z" fill="url(#dg)" stroke="#111" stroke-width="1.2"/><path d="M0.7 10.2 H5.8 V8.6 H10.7 V6.8 H13.8 V15.4 H0.7 Z" fill="url(#fg)" stroke="#1a0a00" stroke-width="1.3"/><path d="M14.6 2 V5 M13.1 3.5 H16.1" stroke="#111" stroke-width="1.1"/></svg><span style="top:9px">MessageList</span>
</div>
<div class="tree-row" style="top:308px;background:#f7f7f7">
<div class="pm p"></div><svg class="fi" width="17" height="17" viewBox="0 0 17 17"><path d="M0.7 1.7 H3.7 V10 H0.7 Z" fill="#fbfbff" stroke="#111" stroke-width="1.2"/><path d="M10.6 1.7 H13.6" fill="none" stroke="#111" stroke-width="1.2"/><path d="M3.7 0.6 H10 L10.7 1.3 V8.6 H3.7 Z" fill="url(#dg)" stroke="#111" stroke-width="1.2"/><path d="M0.7 10.2 H5.8 V8.6 H10.7 V6.8 H13.8 V15.4 H0.7 Z" fill="url(#fg)" stroke="#1a0a00" stroke-width="1.3"/><path d="M14.6 2 V5 M13.1 3.5 H16.1" stroke="#111" stroke-width="1.1"/></svg><span>MetaDataAttributesImport</span>
</div>
<div class="tree-row" style="top:336px;background:#fff">
<div class="pm p"></div><svg class="fi" width="17" height="17" viewBox="0 0 17 17"><path d="M0.7 1.7 H3.7 V10 H0.7 Z" fill="#fbfbff" stroke="#111" stroke-width="1.2"/><path d="M10.6 1.7 H13.6" fill="none" stroke="#111" stroke-width="1.2"/><path d="M3.7 0.6 H10 L10.7 1.3 V8.6 H3.7 Z" fill="url(#dg)" stroke="#111" stroke-width="1.2"/><path d="M0.7 10.2 H5.8 V8.6 H10.7 V6.8 H13.8 V15.4 H0.7 Z" fill="url(#fg)" stroke="#1a0a00" stroke-width="1.3"/><path d="M14.6 2 V5 M13.1 3.5 H16.1" stroke="#111" stroke-width="1.1"/></svg><span>MkzAdministration</span>
</div>
<div class="tree-row" style="top:364px;background:#f7f7f7">
<div class="pm p"></div><svg class="fi" width="17" height="17" viewBox="0 0 17 17"><path d="M0.7 1.7 H3.7 V10 H0.7 Z" fill="#fbfbff" stroke="#111" stroke-width="1.2"/><path d="M10.6 1.7 H13.6" fill="none" stroke="#111" stroke-width="1.2"/><path d="M3.7 0.6 H10 L10.7 1.3 V8.6 H3.7 Z" fill="url(#dg)" stroke="#111" stroke-width="1.2"/><path d="M0.7 10.2 H5.8 V8.6 H10.7 V6.8 H13.8 V15.4 H0.7 Z" fill="url(#fg)" stroke="#1a0a00" stroke-width="1.3"/><path d="M14.6 2 V5 M13.1 3.5 H16.1" stroke="#111" stroke-width="1.1"/></svg><span>OMN-Search (1)</span>
</div>
<div class="tree-row" style="top:392px;background:#fff">
<div class="pm p"></div><svg class="fi" width="17" height="17" viewBox="0 0 17 17"><path d="M0.7 1.7 H3.7 V10 H0.7 Z" fill="#fbfbff" stroke="#111" stroke-width="1.2"/><path d="M10.6 1.7 H13.6" fill="none" stroke="#111" stroke-width="1.2"/><path d="M3.7 0.6 H10 L10.7 1.3 V8.6 H3.7 Z" fill="url(#dg)" stroke="#111" stroke-width="1.2"/><path d="M0.7 10.2 H5.8 V8.6 H10.7 V6.8 H13.8 V15.4 H0.7 Z" fill="url(#fg)" stroke="#1a0a00" stroke-width="1.3"/><path d="M14.6 2 V5 M13.1 3.5 H16.1" stroke="#111" stroke-width="1.1"/></svg><span>ProcessMonitor</span>
</div>
<div class="tree-row" style="top:420px;background:#f7f7f7">
<div class="pm p"></div><svg class="fi" width="17" height="17" viewBox="0 0 17 17"><path d="M0.7 1.7 H3.7 V10 H0.7 Z" fill="#fbfbff" stroke="#111" stroke-width="1.2"/><path d="M10.6 1.7 H13.6" fill="none" stroke="#111" stroke-width="1.2"/><path d="M3.7 0.6 H10 L10.7 1.3 V8.6 H3.7 Z" fill="url(#dg)" stroke="#111" stroke-width="1.2"/><path d="M0.7 10.2 H5.8 V8.6 H10.7 V6.8 H13.8 V15.4 H0.7 Z" fill="url(#fg)" stroke="#1a0a00" stroke-width="1.3"/><path d="M14.6 2 V5 M13.1 3.5 H16.1" stroke="#111" stroke-width="1.1"/></svg><span>ProjectNavigation (1)</span>
</div>
<div class="tree-row" style="top:448px;background:#fff">
<div class="pm p"></div><svg class="fi" width="17" height="17" viewBox="0 0 17 17"><path d="M0.7 1.7 H3.7 V10 H0.7 Z" fill="#fbfbff" stroke="#111" stroke-width="1.2"/><path d="M10.6 1.7 H13.6" fill="none" stroke="#111" stroke-width="1.2"/><path d="M3.7 0.6 H10 L10.7 1.3 V8.6 H3.7 Z" fill="url(#dg)" stroke="#111" stroke-width="1.2"/><path d="M0.7 10.2 H5.8 V8.6 H10.7 V6.8 H13.8 V15.4 H0.7 Z" fill="url(#fg)" stroke="#1a0a00" stroke-width="1.3"/><path d="M14.6 2 V5 M13.1 3.5 H16.1" stroke="#111" stroke-width="1.1"/></svg><span>Reporting</span>
</div>
<div class="tree-row" style="top:476px;background:#f7f7f7">
<div class="pm p"></div><svg class="fi" width="17" height="17" viewBox="0 0 17 17"><path d="M0.7 1.7 H3.7 V10 H0.7 Z" fill="#fbfbff" stroke="#111" stroke-width="1.2"/><path d="M10.6 1.7 H13.6" fill="none" stroke="#111" stroke-width="1.2"/><path d="M3.7 0.6 H10 L10.7 1.3 V8.6 H3.7 Z" fill="url(#dg)" stroke="#111" stroke-width="1.2"/><path d="M0.7 10.2 H5.8 V8.6 H10.7 V6.8 H13.8 V15.4 H0.7 Z" fill="url(#fg)" stroke="#1a0a00" stroke-width="1.3"/><path d="M14.6 2 V5 M13.1 3.5 H16.1" stroke="#111" stroke-width="1.1"/></svg><span>SpecificPage</span>
</div>
<div class="tree-row" style="top:504px;background:#fff">
<div class="pm p"></div><svg class="fi" width="17" height="17" viewBox="0 0 17 17"><path d="M0.7 1.7 H3.7 V10 H0.7 Z" fill="#fbfbff" stroke="#111" stroke-width="1.2"/><path d="M10.6 1.7 H13.6" fill="none" stroke="#111" stroke-width="1.2"/><path d="M3.7 0.6 H10 L10.7 1.3 V8.6 H3.7 Z" fill="url(#dg)" stroke="#111" stroke-width="1.2"/><path d="M0.7 10.2 H5.8 V8.6 H10.7 V6.8 H13.8 V15.4 H0.7 Z" fill="url(#fg)" stroke="#1a0a00" stroke-width="1.3"/><path d="M14.6 2 V5 M13.1 3.5 H16.1" stroke="#111" stroke-width="1.1"/></svg><span>Subscription</span>
</div></div>

<!-- scrollbar -->
<div class="a" style="left:253px;top:186px;width:15px;height:532px;border:1px solid #aaa;background:#fff">
  <div class="a" style="left:0;top:0;width:13px;height:14px;border-bottom:1px solid #aaa"></div>
  <div class="a" style="left:3px;top:5px;border-left:4px solid transparent;border-right:4px solid transparent;border-bottom:4px solid #aaa"></div>
  <div class="a" style="left:0;top:116px;width:13px;height:218px;background:#dedede"></div>
  <div class="a" style="left:3px;top:222px;width:5px;height:1px;background:#704050"></div>
  <div class="a" style="left:3px;top:224px;width:5px;height:1px;background:#50585e"></div>
  <div class="a" style="left:3px;top:226px;width:5px;height:1px;background:#50585e"></div>
  <div class="a" style="left:3px;top:228px;width:5px;height:1px;background:#50585e"></div>
  <div class="a" style="left:0;top:517px;width:13px;height:14px;border-top:1px solid #aaa"></div>
  <div class="a" style="left:3px;top:522px;border-left:4px solid transparent;border-right:4px solid transparent;border-top:4px solid #aaa"></div>
</div>
<!-- splitter left -->
<div class="a" style="left:271px;top:408px;width:1px;height:16px;background:#999"></div>
<div class="a" style="left:273px;top:408px;width:1px;height:16px;background:#999"></div>
<div class="a" style="left:275px;top:408px;width:1px;height:16px;background:#999"></div>

<div class="a" style="left:24px;top:746px;font-size:11px;color:#555;line-height:13px">5.8.2-SNAPSHOT-20150</div>

<!-- RIGHT PANEL -->
<div class="a" style="left:283px;top:128px;width:1039px;height:33px;background:#f0f0f0"></div>
<div class="a" style="left:282px;top:129px;width:1039px;text-align:center;font-size:20px;font-weight:bold;color:#444;line-height:24px">Plug-in configuration: FSNavigation</div>

<div class="panel" style="left:283px;top:167px;width:1039px;height:33px"></div>
<div class="lbl" style="left:295px;top:177px">Configuration identifier</div>
<div class="inp" style="left:429px;top:173px;width:888px;height:22px;border-color:#bbb;border-top-color:#666">
  <div class="a" style="left:4px;top:4px;font-size:10px;color:#555;line-height:12px">P.FSNavigation.Main</div>
</div>

<div class="panel" style="left:283px;top:206px;width:993px;height:24px"></div>
<div class="lbl" style="left:285px;top:210px">Left panel width</div>
<div class="mag" style="left:379px;top:206px;width:42px;height:23px">250</div>
<div class="spin" style="left:421px;top:206px"><div class="u"></div><div class="d"></div></div>
<div class="lbl" style="left:449px;top:210px">Right panel width</div>
<div class="mag" style="left:551px;top:206px;width:42px;height:23px">250</div>
<div class="spin" style="left:593px;top:206px"><div class="u"></div><div class="d"></div></div>
<div class="lbl" style="left:661px;top:210px">Enable grouping</div>
<div class="cb" style="left:751px;top:210px;width:14px;height:14px"></div>
<div class="lbl" style="left:775px;top:210px">Group size</div>
<div class="a" style="left:842px;top:206px;width:60px;height:24px;background:#dcdcdc;border-top:1px solid #808080;border-left:1px solid #d0d0d0;border-right:1px solid #d0d0d0;font-size:10px;color:#333;padding-left:4px;line-height:23px">0</div>
<div class="lbl" style="left:953px;top:210px">Show language bar</div>
<div class="cb" style="left:1056px;top:210px;width:14px;height:14px"></div>
<div class="lbl" style="left:1128px;top:210px">Max result size</div>
<div class="mag" style="left:1216px;top:206px;width:43px;height:23px">0</div>
<div class="spin" style="left:1259px;top:206px"><div class="u"></div><div class="d"></div></div>

<!-- NODES PANEL -->
<div class="panel" style="left:283px;top:236px;width:1039px;height:444px"></div>
<div class="lbl" style="left:296px;top:243px">Nodes</div>
<div class="a" style="left:283px;top:265px;width:220px;height:25px;background:#f7f7f7"></div>
<div class="a" style="left:283px;top:290px;width:220px;height:25px;background:#cccccc"></div>
<div class="a" style="left:283px;top:315px;width:220px;height:25px;background:#f7f7f7"></div>
<div class="a" style="left:283px;top:340px;width:220px;height:25px;background:#fff"></div>
<div class="a" style="left:283px;top:365px;width:220px;height:25px;background:#f7f7f7"></div>
<div class="a" style="left:283px;top:390px;width:220px;height:25px;background:#fff"></div>
<div class="a" style="left:283px;top:415px;width:220px;height:25px;background:#f7f7f7"></div>
<div class="a" style="left:283px;top:440px;width:220px;height:25px;background:#fff"></div>
<div class="a" style="left:283px;top:465px;width:220px;height:25px;background:#f7f7f7"></div>
<div class="a" style="left:283px;top:490px;width:220px;height:25px;background:#fff"></div>
<div class="a" style="left:283px;top:515px;width:220px;height:25px;background:#f7f7f7"></div>
<div class="a" style="left:283px;top:540px;width:220px;height:25px;background:#fff"></div>
<div class="a" style="left:283px;top:565px;width:220px;height:25px;background:#f7f7f7"></div>
<div class="a" style="left:283px;top:590px;width:220px;height:25px;background:#fff"></div>
<div class="a" style="left:283px;top:615px;width:220px;height:25px;background:#f7f7f7"></div>
<div class="a" style="left:283px;top:640px;width:220px;height:7px;background:#fff"></div>
<div class="pm" style="left:292px;top:276px"></div>
<svg class="a" style="left:304px;top:272px" width="16" height="15" viewBox="0 0 16 15"><defs><linearGradient id="nf" x1="0" y1="0" x2="0" y2="1"><stop offset="0" stop-color="#fff6c0"/><stop offset="0.45" stop-color="#f8e070"/><stop offset="1" stop-color="#e8c040"/></linearGradient></defs><path d="M1 3 Q1 1 2.6 1 H5.6 Q6.6 1 7.2 2.2 L7.6 3 H13 Q14.6 3 14.6 4.6 V11.6 Q14.6 13.4 12.9 13.4 H2.6 Q1 13.4 1 11.6 Z" fill="url(#nf)" stroke="#b88a28" stroke-width="1.1"/><path d="M1.6 5.4 H14" stroke="#d8b040" stroke-width="0.8"/></svg>
<div class="a" style="left:322px;top:273px;font-size:10px;color:#666;line-height:12px">Navigation nodes</div>
<div class="a" style="left:319px;top:297px"><svg width="15" height="15" viewBox="0 0 15 15"><path d="M2.3 3 V10.5 M6 5.7 H12 M6 9.2 H12 M6 12.6 H12" fill="none" stroke="#d8c8a0" stroke-width="0.9"/><g fill="#0000b8"><circle cx="2.3" cy="2.2" r="1.5"/><circle cx="5.7" cy="5.7" r="1.5"/><circle cx="12.7" cy="5.7" r="1.5"/><circle cx="5.7" cy="9.2" r="1.5"/><circle cx="12.7" cy="9.2" r="1.5"/><circle cx="12.7" cy="12.6" r="1.5"/></g></svg></div>
<div class="a" style="left:336px;top:298px;font-size:10px;color:#222;line-height:12px">Daten</div>
<div class="a" style="left:319px;top:322px"><svg width="15" height="15" viewBox="0 0 15 15"><path d="M2.3 3 V10.5 M6 5.7 H12 M6 9.2 H12 M6 12.6 H12" fill="none" stroke="#d8c8a0" stroke-width="0.9"/><g fill="#0000b8"><circle cx="2.3" cy="2.2" r="1.5"/><circle cx="5.7" cy="5.7" r="1.5"/><circle cx="12.7" cy="5.7" r="1.5"/><circle cx="5.7" cy="9.2" r="1.5"/><circle cx="12.7" cy="9.2" r="1.5"/><circle cx="12.7" cy="12.6" r="1.5"/></g></svg></div>
<div class="a" style="left:336px;top:323px;font-size:10px;color:#666;line-height:12px">Production</div>

<!-- form -->
<div class="lbl" style="left:520px;top:279px">Node Type</div>
<div class="inp" style="left:608px;top:276px;width:704px;height:23px;border-color:#aaa">
  <div class="a" style="left:4px;top:5px;font-size:11px;color:#555;line-height:13px">FileSystem</div>
  <div class="ddb"></div>
</div>
<div class="cb" style="left:518px;top:317px"></div>
<svg class="a" style="left:518px;top:317px" width="14" height="14"><path d="M3 7 L6 11 L11 2" fill="none" stroke="#555" stroke-width="1.6"/></svg>
<div class="a" style="left:535px;top:316px;font-size:11px;color:#666;line-height:13px">Expanded by Default</div>
<div class="cb" style="left:651px;top:317px"></div>
<div class="a" style="left:668px;top:316px;font-size:11px;color:#666;line-height:13px">Enable filters for Tree</div>

<div class="lbl" style="left:520px;top:351px">Node Name</div>
<div class="inp" style="left:608px;top:348px;width:704px;height:22px;border-color:#ccc;border-top-color:#777">
  <div class="a" style="left:4px;top:4px;font-size:10px;color:#555;line-height:12px">Daten</div>
</div>
<div class="lbl" style="left:520px;top:387px">RNC Name</div>
<div class="inp" style="left:608px;top:384px;width:704px;height:23px;border-color:#aaa">
  <div class="a" style="left:4px;top:5px;font-size:11px;color:#555;line-height:13px">data</div>
  <div class="ddb"></div>
</div>
<div class="lbl" style="left:520px;top:426px">Relative path</div>
<div class="inp" style="left:610px;top:423px;width:239px;height:24px;border-color:#aaa">
  <div class="a" style="left:3px;top:5px;font-size:11px;color:#555;line-height:13px">/</div>
  <div class="ddb" style="width:19px"></div>
</div>
<div class="lbl" style="left:861px;top:426px">Functions</div>
<div class="inp" style="left:934px;top:423px;width:378px;height:23px;border-color:#aaa">
  <div class="a" style="left:4px;top:5px;font-size:11px;color:#555;line-height:13px">New directory</div>
  <div class="ddb"></div>
</div>

<!-- splitter mid -->
<div class="a" style="left:506px;top:465px;width:1px;height:15px;background:#999"></div>
<div class="a" style="left:508px;top:465px;width:1px;height:15px;background:#999"></div>
<div class="a" style="left:510px;top:465px;width:1px;height:15px;background:#999"></div>

<div class="lbl" style="left:530px;top:458px">Content Views</div>

<!-- grid -->
<div class="a" style="left:518px;top:485px;width:794px;height:160px;background:#f7f7f7;overflow:hidden" id="grid">
  <div class="grow" style="top:0;height:22px;background:#fff;border-bottom:1px solid #aab0b5"></div>
  <div class="grow" style="top:22px;background:#f7f7f7"></div>
  <div class="grow" style="top:44px;background:#fff"></div>
  <div class="grow" style="top:66px;background:#f7f7f7"></div>
  <div class="grow" style="top:88px;background:#fff"></div>
  <div class="grow" style="top:110px;background:#f7f7f7"></div>
  <div class="grow" style="top:132px;background:#fff"></div>
  <div class="vl" style="left:44px;top:0;height:160px"></div>
  <div class="vl" style="left:111px;top:0;height:160px"></div>
  <div class="vl" style="left:258px;top:0;height:160px"></div>
  <div class="vl" style="left:552px;top:0;height:160px"></div>
  <div class="vl" style="left:699px;top:0;height:22px"></div><div class="vl" style="left:700px;top:22px;height:138px"></div>
  <div class="cell" style="left:7px">Default</div>
  <div class="cell" style="left:51px;width:59px;overflow:hidden">Show Containers</div>
  <div class="cell" style="left:119px">Content plug-in</div>
  <div class="cell" style="left:266px">Tooltip Text</div>
  <div class="cell" style="left:560px">Object type</div>
  <div class="cell" style="left:707px">Panel Position</div>

  <div class="cell" style="left:119px;top:27px">C.FSTable.MAM.Standard</div>
  <div class="cell" style="left:266px;top:27px">C.FSTable.MAM.Standard</div>
  <div class="cell" style="left:560px;top:27px">com.meylemueller.obj.isy.ISYC</div>
  <div class="cell" style="left:707px;top:27px">Center</div>
  <div class="cell" style="left:119px;top:49px">C.FSDetail.MAM</div>
  <div class="cell" style="left:266px;top:49px">C.FSDetail.MAM</div>
  <div class="cell" style="left:560px;top:49px">com.meylemueller.obj.isy.ISYC</div>
  <div class="cell" style="left:707px;top:49px">Right</div>
  <div class="cell" style="left:119px;top:71px">C.FSSingleObject</div>
  <div class="cell" style="left:266px;top:71px">C.FSSingleObject</div>
  <div class="cell" style="left:560px;top:71px">com.meylemueller.obj.isy.ISYC</div>
  <div class="cell" style="left:707px;top:71px">Center</div>
  <!-- checkboxes -->
  <div class="cb" style="left:15px;top:26px"></div>
  <svg class="a" style="left:15px;top:26px" width="14" height="14"><path d="M3.5 7.5 L6 11 L11 3" fill="none" stroke="#dcdcdc" stroke-width="1.6"/></svg>
  <div class="cb" style="left:70px;top:26px"></div>
  <svg class="a" style="left:70px;top:26px" width="14" height="14"><path d="M3.2 7 L6 11 L11 2.8" fill="none" stroke="#444" stroke-width="2"/></svg>
  <div class="cb" style="left:15px;top:48px"></div>
  <svg class="a" style="left:15px;top:48px" width="14" height="14"><path d="M3.5 7.5 L6 11 L11 3" fill="none" stroke="#dcdcdc" stroke-width="1.6"/></svg>
  <div class="cb" style="left:15px;top:70px"></div>
</div>

<!-- red arrow -->
<svg class="a" style="left:440px;top:505px" width="90" height="22"><path d="M8.5 11 H62" stroke="#f00000" stroke-width="3.2" stroke-linecap="round"/><path d="M61.5 5.5 L81.5 10.7 L61.5 15.8 Z" fill="#f00000" stroke="#f00000" stroke-width="2.4" stroke-linejoin="round"/></svg>

<!-- buttons node tree -->
<div class="btn" style="left:283px;top:653px;width:22px;height:22px;border-color:#b0b0b0"><svg width="20" height="20"><path d="M10 3.9 L14.1 8.6 V9 H12 V14.7 H8 V9 H5.9 V8.6 Z" fill="#000"/></svg></div>
<div class="btn" style="left:313px;top:653px;width:22px;height:22px;border-color:#b0b0b0"><svg width="20" height="20"><path d="M10 14.7 L14.1 10.3 V10 H12 V3.9 H8.1 V10 H5.9 V10.3 Z" fill="#000"/></svg></div>
<div class="btn" style="left:366px;top:653px;width:64px;height:22px;line-height:20px;color:#555">Add</div>
<div class="btn" style="left:438px;top:653px;width:65px;height:22px;line-height:20px;color:#555">Remove</div>

<div class="btn" style="left:518px;top:651px;width:22px;height:22px;border-color:#c8c8c8"><svg width="20" height="20"><path d="M10 3.9 L14.1 8.6 V9 H12 V14.7 H8 V9 H5.9 V8.6 Z" fill="#000"/></svg></div>
<div class="btn" style="left:548px;top:651px;width:22px;height:22px;border-color:#c8c8c8"><svg width="20" height="20"><path d="M10 14.7 L14.1 10.3 V10 H12 V3.9 H8.1 V10 H5.9 V10.3 Z" fill="#000"/></svg></div>
<div class="btn" style="left:578px;top:651px;width:76px;height:24px;line-height:20px;border-color:#1010f0">Functions</div>
<div class="btn" style="left:662px;top:651px;width:162px;height:24px;line-height:20px;border-color:#3a7a72">Secondary action Functions</div>
<div class="a" style="left:663px;top:677px;width:160px;height:3px;background:#f80000;border-radius:1.5px"></div>
<div class="btn" style="left:961px;top:651px;width:77px;height:22px;line-height:20px">Set default</div>
<div class="btn" style="left:1175px;top:651px;width:64px;height:22px;line-height:20px;border-color:#999;color:#555">Add</div>
<div class="btn" style="left:1247px;top:651px;width:65px;height:22px;line-height:20px">Remove</div>

<div class="btn" style="left:283px;top:686px;width:116px;height:22px;line-height:20px">Save configuration</div>
<div class="btn" style="left:407px;top:686px;width:132px;height:22px;line-height:20px">Remove configuration</div>

</div></body></html>
